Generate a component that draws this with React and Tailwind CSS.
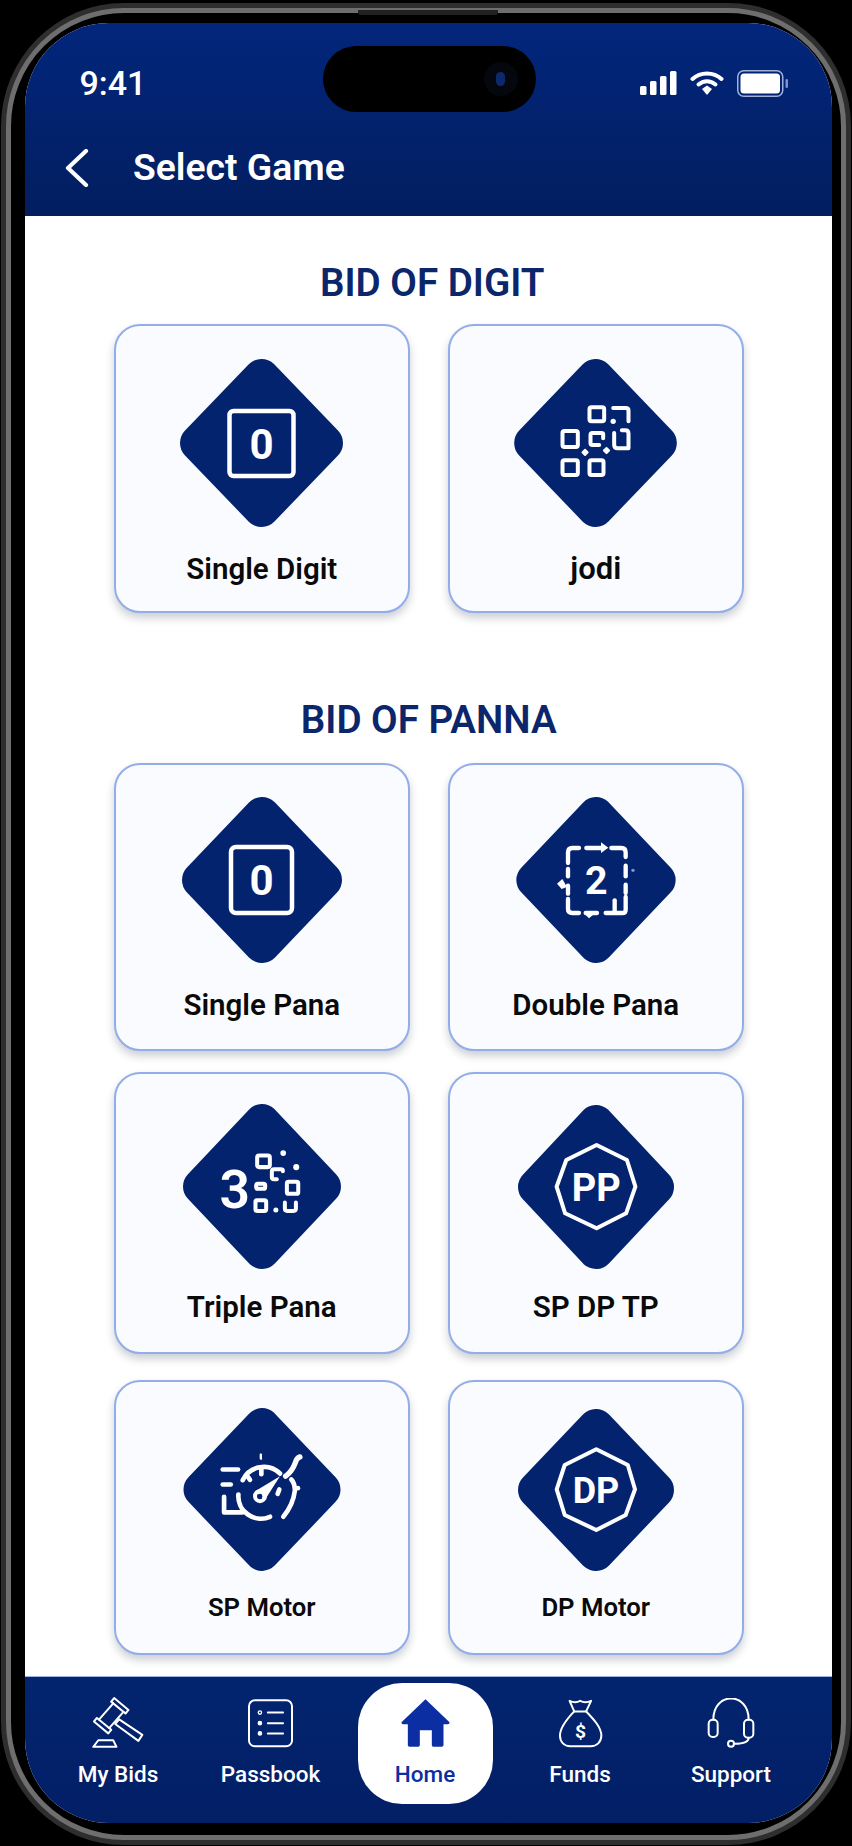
const NAVY = "#04236f";

function Diamond({ x = 0, y = 0, w, h, size, children }) {
  const r = (18 * w) / size[0];
  const ry = (18 * h) / size[1];
  const pts = `${x + w / 2},${y + ry} ${x + w - r},${y + h / 2} ${x + w / 2},${y + h - ry} ${x + r},${y + h / 2}`;
  return (
    <svg width={size[0]} height={size[1]} viewBox={`${x} ${y} ${w} ${h}`} className="block shrink-0">
      <polygon points={pts} fill={NAVY} stroke={NAVY} strokeWidth={r * 2} strokeLinejoin="round" />
      {children}
    </svg>
  );
}

const T = ({ x, y, s, children, w = 700 }) => (
  <text x={x} y={y} fontSize={s} fontWeight={w} fill="#fff" textAnchor="middle" dominantBaseline="central" fontFamily="Roboto, sans-serif">
    {children}
  </text>
);

const IconSingleDigit = (
  <Diamond w={163} h={168} size={[163, 168]}>
    <rect x="49.5" y="52" width="64" height="65" rx="4" fill="none" stroke="#fff" strokeWidth="4.5" />
    <T x={81.5} y={85} s={42}>0</T>
  </Diamond>
);

const IconJodi = (
  <Diamond x={45} y={58} w={488} h={504} size={[163, 168]}>
    <g fill="none" stroke="#fff" strokeWidth="12" strokeLinejoin="round" strokeLinecap="round">
      <rect x="271" y="203" width="44" height="42" rx="6" />
      <path d="M342 205 H380 Q388 205 388 213 V245" />
      <rect x="190" y="274" width="46" height="48" rx="6" />
      <path d="M312 296 V284 Q312 280 306 280 H280 Q274 280 274 286 V310 Q274 316 280 316 H300" />
      <path d="M345 280 V315 Q345 326 356 326 H388 V282 Q388 272 378 272 H368" />
      <rect x="190" y="362" width="46" height="44" rx="6" />
      <rect x="271" y="362" width="42" height="44" rx="6" />
    </g>
    <circle cx="342" cy="245" r="8" fill="#fff" />
    <rect x="249" y="329" width="17" height="17" rx="3" fill="#fff" transform="rotate(45 257 338)" />
    <rect x="314" y="324" width="17" height="17" rx="3" fill="#fff" transform="rotate(45 322 332)" />
  </Diamond>
);

const IconSinglePana = (
  <Diamond w={160} h={166} size={[160, 166]}>
    <rect x="49" y="50" width="61" height="66" rx="5" fill="none" stroke="#fff" strokeWidth="4.5" />
    <T x={79.5} y={83} s={42}>0</T>
  </Diamond>
);

const IconDoublePana = (
  <Diamond x={50} y={52} w={478} h={498} size={[160, 166]}>
    <g fill="none" stroke="#fff" strokeWidth="13" strokeLinecap="round" strokeLinejoin="round">
      <path d="M205 250 V218 Q205 205 218 205 H238" />
      <path d="M260 205 H310" />
      <path d="M335 205 H365 Q378 205 378 218 V232" />
      <path d="M378 258 V290" />
      <path d="M378 315 V340" />
      <path d="M378 352 V390 Q378 400 368 400 H318" />
      <path d="M345 362 V398" />
      <path d="M258 400 H292" />
      <path d="M238 400 H218 Q205 400 205 388 V358" />
      <path d="M205 268 V290" />
      <path d="M205 318 V342" />
    </g>
    <polygon points="304,188 326,204 304,220" fill="#fff" />
    <polygon points="172,312 188,298 202,322 186,328" fill="#fff" />
    <polygon points="254,402 284,402 268,416" fill="#fff" />
    <circle cx="400" cy="272" r="5" fill="#7f97d4" />
    <T x={290} y={304} s={118}>2</T>
  </Diamond>
);

const IconTriplePana = (
  <Diamond x={67} y={43} w={473} h={494} size={[158, 165]}>
    <T x={222} y={298} s={160} w={600}>3</T>
    <g fill="none" stroke="#fff" strokeWidth="12" strokeLinecap="round" strokeLinejoin="round">
      <rect x="289" y="197" width="38" height="35" rx="6" />
      <path d="M366 244 V242 Q366 238 360 238 H340 Q333 238 333 245 V262 Q333 268 340 268 H348" />
      <rect x="286" y="282" width="27" height="15" rx="5" />
      <rect x="378" y="276" width="34" height="36" rx="5" />
      <rect x="284" y="331" width="32" height="32" rx="5" />
      <path d="M372 338 V356 Q372 363 379 363 H398 Q405 363 405 356 V338" />
    </g>
    <circle cx="367" cy="190" r="8.5" fill="#fff" />
    <circle cx="406" cy="232" r="9" fill="#fff" />
    <circle cx="345" cy="360" r="7.5" fill="#fff" />
  </Diamond>
);

const IconPP = (
  <Diamond w={156} h={164} size={[156, 164]}>
    <polygon points="78.6,40 108.9,55 117.4,81.7 108.1,108.3 78.6,123.3 47.1,108.3 38.6,81.7 48.3,55" fill="none" stroke="#fff" strokeWidth="4" strokeLinejoin="round" />
    <T x={78.3} y={83} s={38}>PP</T>
  </Diamond>
);

const IconSPMotor = (
  <Diamond x={68} y={25} w={472} h={490} size={[158, 163]}>
    <g fill="none" stroke="#fff" strokeWidth="14" strokeLinecap="round" strokeLinejoin="round">
      <path d="M186 210 H232" />
      <path d="M186 255 H210" />
      <path d="M190 292 V339 H245" />
      <path d="M358 222 A70 70 0 0 0 246 242" />
      <path d="M233 285 A68 68 0 0 0 328 352" />
      <path d="M302 205 V224" />
      <path d="M259 228 L268 241" />
      <path d="M356 270 L351 283" />
      <path d="M368 352 Q398 315 403 272 Q402 250 392 240" />
      <path d="M375 230 Q395 215 404 190 Q408 175 418 172" strokeWidth="16" />
    </g>
    <polygon points="298,160 305,180 299,180" fill="#fff" />
    <rect x="297" y="162" width="7" height="18" rx="3" fill="#fff" />
    <circle cx="412" cy="266" r="7" fill="#fff" />
    <circle cx="298" cy="290" r="15" fill="none" stroke="#fff" strokeWidth="12" />
    <polygon points="282,276 312,302 358,230" fill="#fff" />
    <circle cx="298" cy="290" r="7" fill={NAVY} />
  </Diamond>
);

const IconDP = (
  <Diamond w={156} h={162} size={[156, 162]}>
    <polygon points="78.3,40.3 109.8,56 117,80.3 107.7,106 78.3,121 46.7,106 38.7,80.3 46.7,56" fill="none" stroke="#fff" strokeWidth="4" strokeLinejoin="round" />
    <T x={78} y={82} s={36}>DP</T>
  </Diamond>
);

function Card({ icon, label, pad, labelCls }) {
  return (
    <div className={`flex h-full w-[296px] flex-col items-center rounded-[26px] border-2 border-[#93ade8] bg-[#f9fbff] shadow-[0_5px_8px_rgba(20,30,60,0.22)] ${pad}`}>
      {icon}
      <div className={`h-[32px] whitespace-nowrap text-center font-semibold leading-[32px] text-[#0a0a0a] ${labelCls}`}>{label}</div>
    </div>
  );
}

const NavIcon = ({ vb, w, h, children }) => (
  <svg width={w} height={h} viewBox={vb} fill="none" stroke="#fff" strokeWidth="6" strokeLinejoin="round" strokeLinecap="round" className="block">
    {children}
  </svg>
);

function NavLabel({ children, active }) {
  return (
    <span className={`mt-[13px] text-[22.5px] font-medium leading-[26px] ${active ? "text-[#0b2fa3]" : "text-white"}`}>{children}</span>
  );
}

function NavItem({ icon, label }) {
  return (
    <div className="flex h-[121px] flex-col items-center pt-[15px]">
      <div className="flex h-[50px] items-center justify-center">{icon}</div>
      <NavLabel>{label}</NavLabel>
    </div>
  );
}

export default function App() {
  return (
    <div className="h-[1846px] w-[852px] overflow-hidden bg-black pl-[6px] pt-[8px] font-['Roboto',sans-serif]">
      <div className="relative h-[1832px] w-[840px] rounded-[118px] border-[5px] border-[#6e6e6e] bg-black pb-[12px] pl-[13.5px] pr-[9px] pt-[10px] shadow-[0_0_0_5px_#2e2e2e]">
        <div className="absolute left-[347px] top-[-3px] h-[5px] w-[140px] rounded-b-[3px] bg-[#222]" />
        <div className="relative flex h-full w-full flex-col overflow-hidden rounded-[84px] bg-white">
          {/* header */}
          <div className="h-[193px] shrink-0 bg-gradient-to-b from-[#03267c] to-[#021e60]">
            <div className="mt-[34px] flex h-[52px] items-center justify-between pl-[55px] pr-[43px]">
              <span className="text-[34px] font-medium leading-none text-white">9:41</span>
              <div className="flex items-center gap-[13px]">
                <svg width="37" height="24" viewBox="0 0 37 24" fill="#fff" className="block">
                  <rect x="0" y="15" width="6.5" height="9" rx="1.5" />
                  <rect x="10" y="10" width="6.5" height="14" rx="1.5" />
                  <rect x="20" y="5" width="6.5" height="19" rx="1.5" />
                  <rect x="30" y="0" width="6.5" height="24" rx="1.5" />
                </svg>
                <svg width="34" height="25" viewBox="0 0 34 25" fill="none" stroke="#fff" strokeWidth="4" strokeLinecap="round" className="block">
                  <path d="M2.5 8 C10.5 0.5 23.5 0.5 31.5 8" />
                  <path d="M8.5 13.5 C13.5 9 20.5 9 25.5 13.5" />
                  <polygon points="12,18 17,14.5 22,18 17,24" fill="#fff" stroke="none" />
                </svg>
                <svg width="52" height="27" viewBox="0 0 52 27" className="block">
                  <rect x="0.75" y="0.75" width="45" height="25.5" rx="6" fill="none" stroke="#9fb0d8" strokeWidth="1.5" />
                  <rect x="3.5" y="3.5" width="39.5" height="20" rx="3.5" fill="#fff" />
                  <rect x="48.5" y="9" width="2.5" height="9" rx="1.2" fill="#7f92c4" />
                </svg>
              </div>
            </div>
            <div className="flex h-[118px] items-center pl-[40px]">
              <svg width="24" height="38" viewBox="0 0 24 38" fill="none" stroke="#fff" strokeWidth="4.2" strokeLinecap="round" strokeLinejoin="round" className="block">
                <path d="M21 2 L3 19 L21 36" />
              </svg>
              <span className="ml-[44.5px] text-[37.3px] font-semibold leading-none text-white">Select Game</span>
            </div>
          </div>

          {/* main */}
          <div className="flex min-h-0 flex-1 flex-col items-center overflow-hidden bg-white pl-[1px]">
            <h2 className="ml-[7px] mt-[45px] h-[44px] text-[38.6px] font-semibold leading-[44px] text-[#0b266b]">BID OF DIGIT</h2>
            <div className="mt-[19px] flex h-[289px] gap-[38px]">
              <Card icon={IconSingleDigit} label="Single Digit" pad="pt-[33px]" labelCls="mt-[26px] text-[29.5px]" />
              <Card icon={IconJodi} label="jodi" pad="pt-[33px]" labelCls="mt-[26px] text-[31px]" />
            </div>

            <h2 className="mt-[85px] h-[44px] text-[38.6px] font-semibold leading-[44px] text-[#0b266b]">BID OF PANNA</h2>
            <div className="mt-[21px] flex h-[288px] gap-[38px]">
              <Card icon={IconSinglePana} label="Single Pana" pad="pt-[32px]" labelCls="mt-[26px] text-[29.5px]" />
              <Card icon={IconDoublePana} label="Double Pana" pad="pt-[32px]" labelCls="mt-[26px] text-[29.5px]" />
            </div>
            <div className="mt-[21px] flex h-[282px] gap-[38px]">
              <Card icon={IconTriplePana} label="Triple Pana" pad="pt-[30px]" labelCls="mt-[22px] text-[29.5px]" />
              <Card icon={IconPP} label="SP DP TP" pad="pt-[31px]" labelCls="mt-[22px] text-[29.5px]" />
            </div>
            <div className="mt-[26px] flex h-[275px] gap-[38px]">
              <Card icon={IconSPMotor} label="SP Motor" pad="pt-[26px]" labelCls="mt-[20px] text-[25.7px]" />
              <Card icon={IconDP} label="DP Motor" pad="pt-[27px]" labelCls="mt-[20px] text-[25.7px]" />
            </div>
          </div>

          {/* bottom nav */}
          <div className="grid h-[147px] shrink-0 grid-cols-[154px_151px_158px_152px_150px] border-t border-t-[#9db4e6] bg-gradient-to-b from-[#03246f] to-[#021f66] pl-[16.5px] pt-[6px]">
            <NavItem
              label="My Bids"
              icon={
                <NavIcon vb="96 46 160 156" w={53} h={52}>
                  <path d="M110.9 108.7 L154.1 144.5 L145.1 155.3 L101.9 119.5 Z" />
                  <path d="M162.9 48.7 L206.1 84.5 L197.1 95.3 L153.9 59.5 Z" />
                  <path d="M117.1 113.8 L160.1 64.6" />
                  <path d="M147.9 139.4 L190.9 90.2" />
                  <path d="M166 127 L178 113 L248 160 L236 178 Z" />
                  <path d="M100 196 H170 L160 176 H115 Z" />
                </NavIcon>
              }
            />
            <NavItem
              label="Passbook"
              icon={
                <NavIcon vb="560 54 140 148" w={47} h={49}>
                  <rect x="565" y="58" width="130" height="139" rx="18" />
                  <circle cx="598" cy="95" r="5" strokeWidth="4" />
                  <circle cx="598" cy="127" r="5" fill="#fff" strokeWidth="4" />
                  <circle cx="598" cy="158" r="5" fill="#fff" strokeWidth="4" />
                  <path d="M622 95 H668" />
                  <path d="M622 127 H668" />
                  <path d="M622 158 H668" />
                </NavIcon>
              }
            />
            <div className="flex justify-center">
              <div className="flex h-[121px] w-[135px] flex-col items-center rounded-[44px] bg-white pt-[15px]">
                <div className="flex h-[50px] items-center justify-center">
                  <svg width="49" height="48" viewBox="0 0 146 144" fill="#0b2fa3" className="block">
                    <path d="M73 1 L145 70 Q146 76 140 76 H127 V138 Q127 143 122 143 H96 Q92 143 92 138 V94 H56 V138 Q56 143 51 143 H25 Q20 143 20 138 V76 H6 Q0 76 1 70 Z" />
                  </svg>
                </div>
                <NavLabel active>Home</NavLabel>
              </div>
            </div>
            <NavItem
              label="Funds"
              icon={
                <NavIcon vb="470 52 142 150" w={47} h={50}>
                  <path d="M508 60 Q525 68 540 60 Q555 68 573 60 L558 92 H522 Z" />
                  <path d="M522 92 C500 115 479 140 479 165 C479 185 492 197 510 197 H572 C590 197 604 185 604 165 C604 140 580 115 558 92" />
                  <text x="541" y="152" fontSize="58" fontWeight="700" fill="#fff" stroke="none" textAnchor="middle" dominantBaseline="central" fontFamily="Roboto, sans-serif">$</text>
                </NavIcon>
              }
            />
            <NavItem
              label="Support"
              icon={
                <NavIcon vb="920 50 150 150" w={50} h={50}>
                  <path d="M942 115 C942 30 1048 30 1048 115" />
                  <rect x="928" y="115" width="27" height="52" rx="12" />
                  <rect x="1034" y="115" width="28" height="54" rx="12" />
                  <path d="M1048 169 C1048 180 1032 187 1006 187" />
                  <circle cx="995" cy="187" r="9" />
                </NavIcon>
              }
            />
          </div>

          {/* dynamic island overlays the screen */}
          <div className="absolute left-[298px] top-[23px] flex h-[66px] w-[213px] items-center justify-end rounded-[33px] bg-black pr-[18px]">
            <div className="flex h-[34px] w-[34px] items-center justify-center rounded-full bg-[#05070f]">
              <div className="h-[14px] w-[9px] rounded-full bg-[#0c2a6b]" />
            </div>
          </div>
        </div>
      </div>
    </div>
  );
}
